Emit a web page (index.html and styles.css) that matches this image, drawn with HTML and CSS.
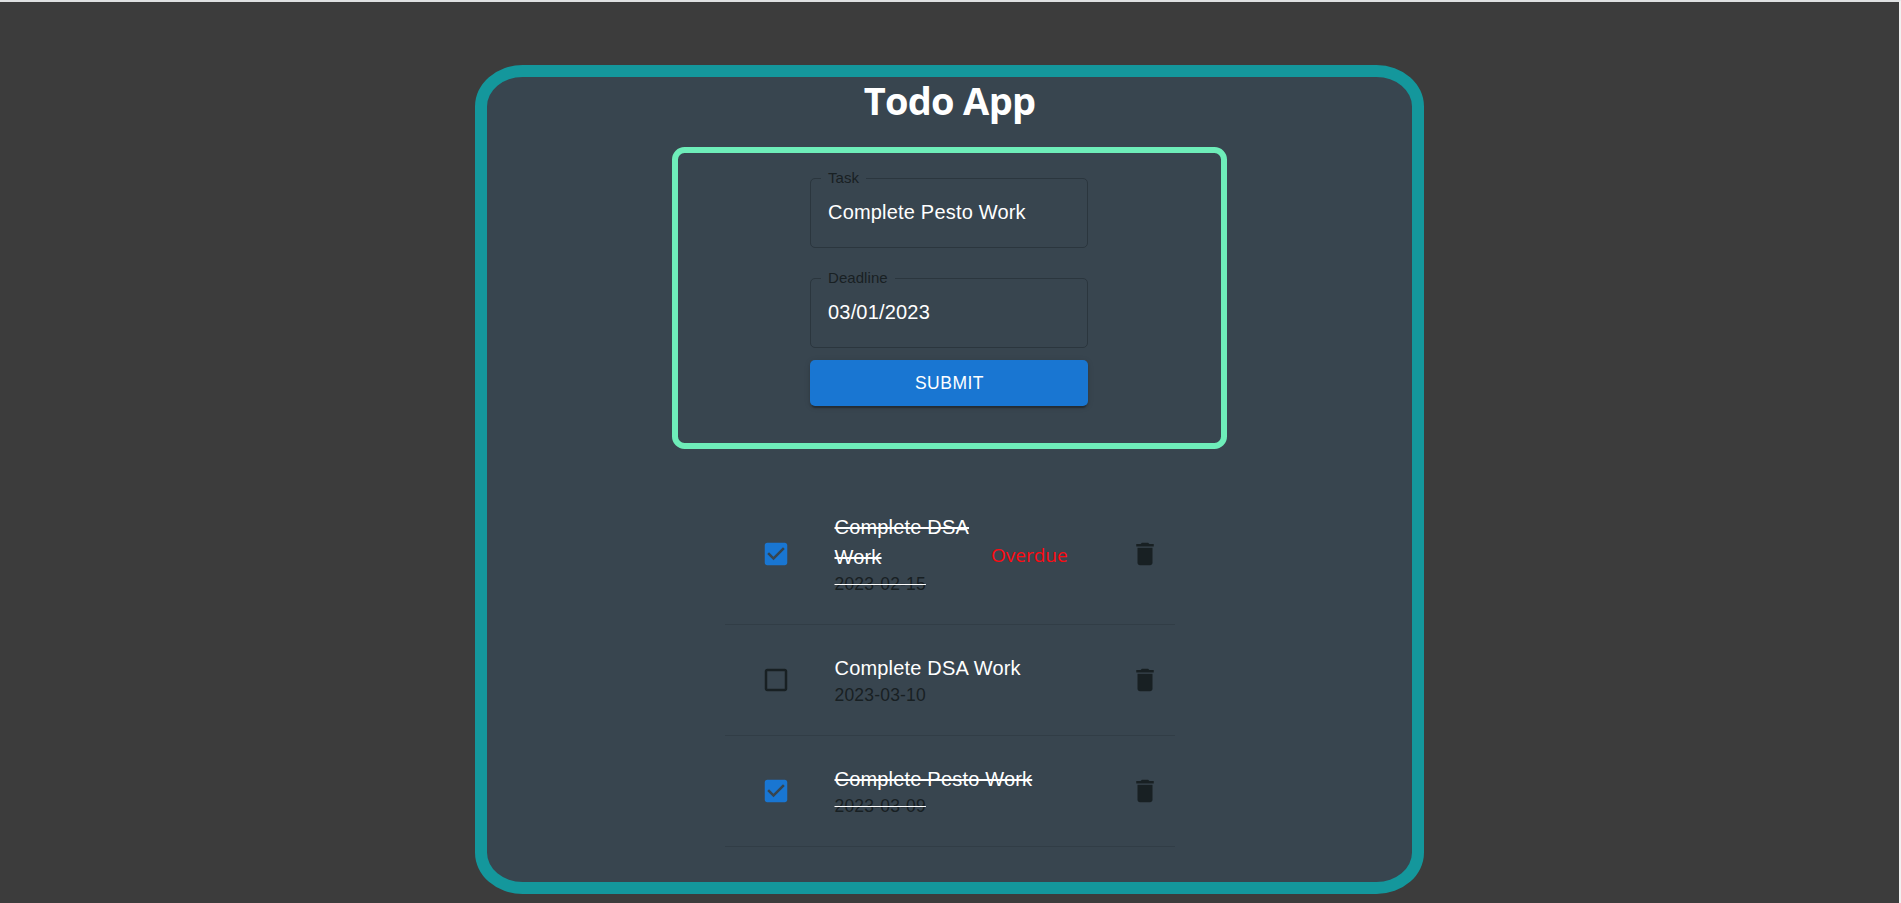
FILE: index.html
```html
<!DOCTYPE html>
<html lang="en">
<head>
<meta charset="utf-8">
<title>Todo App</title>
<link rel="stylesheet" href="styles.css">
</head>
<body>
<svg class="defs" width="0" height="0" aria-hidden="true">
  <symbol id="checked" viewBox="0 0 24 24"><path d="M19 3H5c-1.11 0-2 .9-2 2v14c0 1.1.89 2 2 2h14c1.11 0 2-.9 2-2V5c0-1.1-.89-2-2-2zm-9 14l-5-5 1.41-1.41L10 14.17l7.59-7.59L19 8l-9 9z"/></symbol>
  <symbol id="unchecked" viewBox="0 0 24 24"><path d="M19 5v14H5V5h14m0-2H5c-1.1 0-2 .9-2 2v14c0 1.1.9 2 2 2h14c1.1 0 2-.9 2-2V5c0-1.1-.9-2-2-2z"/></symbol>
  <symbol id="trash" viewBox="0 0 24 24"><path d="M6 19c0 1.1.9 2 2 2h8c1.1 0 2-.9 2-2V7H6v12zM19 4h-3.500l-1-1h-5l-1 1H5v2h14V4z"/></symbol>
</svg>
<main class="page">
  <section class="app">
    <h1 class="title">Todo App</h1>
    <form class="form">
      <fieldset class="field"><legend class="label">Task</legend><div class="value">Complete Pesto Work</div></fieldset>
      <fieldset class="field"><legend class="label">Deadline</legend><div class="value">03/01/2023</div></fieldset>
      <button class="submit" type="button">SUBMIT</button>
    </form>
    <ul class="list">
      <li class="item item-tall done">
        <svg class="icon check on"><use href="#checked"/></svg>
        <div class="text"><div class="name"><span>Complete DSA Work</span></div><div class="date"><span>2023-02-15</span></div></div>
        <span class="overdue">Overdue</span>
        <svg class="icon"><use href="#trash"/></svg>
      </li>
      <li class="item">
        <svg class="icon check"><use href="#unchecked"/></svg>
        <div class="text"><div class="name"><span>Complete DSA Work</span></div><div class="date"><span>2023-03-10</span></div></div>
        <svg class="icon"><use href="#trash"/></svg>
      </li>
      <li class="item done">
        <svg class="icon check on"><use href="#checked"/></svg>
        <div class="text"><div class="name"><span>Complete Pesto Work</span></div><div class="date"><span>2023-03-09</span></div></div>
        <svg class="icon"><use href="#trash"/></svg>
      </li>
    </ul>
  </section>
</main>
</body>
</html>
```
FILE: styles.css
```css
* { box-sizing: border-box; }
body {
  margin: 0;
  height: 903px;
  overflow: hidden;
  background: #3c3c3c;
  border-top: 2px solid #dfe1e2;
  border-right: 2px solid #f1f1f1;
  font-family: "Liberation Sans", Arial, sans-serif;
  color: #fff;
}
.defs { display: block; }
.page { padding-top: 63px; }
.app {
  width: 949px;
  height: 829px;
  margin: 0 auto;
  border: 12px solid #14979c;
  border-radius: 5%;
  background: #38454f;
  display: flex;
  flex-direction: column;
  align-items: center;
}
.title {
  margin: 0;
  height: 70px;
  line-height: 46px;
  font-family: "Open Sans", "Noto Sans", sans-serif;
  font-size: 38px;
  font-weight: 700;
  letter-spacing: -0.7px;
  white-space: nowrap;
}
.form {
  width: 555px;
  height: 302px;
  border: 6px solid #6eedb9;
  border-radius: 12.5px;
  display: flex;
  flex-direction: column;
  align-items: center;
  padding: 17px 1px 0 0;
}
.field {
  width: 278px;
  height: 78px;
  margin: 0 0 22px;
  padding: 0 17px 0 10px;
  border: 1px solid #2b363e;
  border-radius: 5px;
  min-width: 0;
}
.field + .submit { margin-top: -10px; }
.label {
  height: 17px;
  padding: 0 7px;
  line-height: 15px;
  font-size: 15px;
  letter-spacing: 0.06px;
  color: #182023;
}
.value {
  padding: 10px 0 0 7px;
  line-height: 30px;
  font-size: 20px;
  letter-spacing: 0.19px;
}
.submit {
  width: 278px;
  height: 46px;
  padding: 0 0 0 1px;
  border: 0;
  border-radius: 5px;
  background: #1976d2;
  color: #fff;
  font: 500 17.5px/30px "Liberation Sans", Arial, sans-serif;
  letter-spacing: 0.5px;
  box-shadow: 0 4px 1px -2px rgba(0,0,0,.2), 0 2px 2px rgba(0,0,0,.14), 0 1px 6px rgba(0,0,0,.12);
}
.list { list-style: none; width: 450px; margin: 35px 0 0; padding: 0; }
.item {
  display: flex;
  align-items: center;
  height: 111px;
  padding: 0 15px 0 36px;
  border-bottom: 1px solid #313d46;
}
.item-tall { height: 141px; }
.icon { width: 30px; height: 30px; flex: none; fill: #182023; }
.check { margin-right: 44px; }
.on { fill: #1976d2; }
.text { flex: 1; min-width: 0; }
.name { line-height: 30px; font-size: 20px; letter-spacing: 0.19px; }
.date { line-height: 25px; font-size: 17.5px; letter-spacing: 0.19px; color: #182023; }
.done span:not(.overdue) { text-decoration: line-through; text-decoration-color: #fff; }
.done .name span { text-decoration-thickness: 2px; }
.done .date span { text-decoration-thickness: 1px; }
.overdue {
  width: 138.500px;
  padding-top: 2px;
  color: #ff0a12;
  font-family: "Open Sans", "Noto Sans", sans-serif;
  font-size: 19px;
  line-height: 30px;
}
```
